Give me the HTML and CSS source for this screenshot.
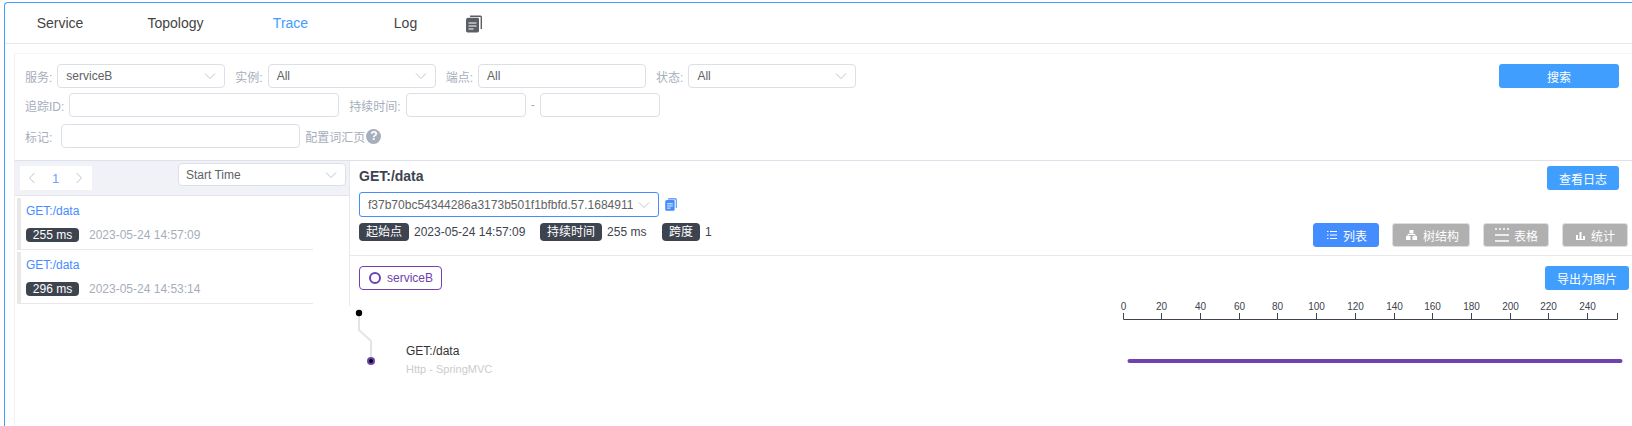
FILE: index.html
```html
<!DOCTYPE html>
<html lang="en">
<head>
  <meta charset="UTF-8">
  <meta name="viewport" content="width=device-width, initial-scale=1.0">
  <title>Trace</title>
  <link rel="stylesheet" href="styles.css">
</head>
<body>
  <svg class="defs" width="0" height="0">
    <symbol id="chevron-down" viewBox="0 0 12 8">
      <path d="M1 1.5 6 6.5 11 1.5" fill="none" stroke="#c0c4cc" stroke-width="1"/>
    </symbol>
    <symbol id="copy" viewBox="0 0 16 18">
      <path d="M4 0.5H14.5A1.5 1.5 0 0 1 16 2V14H14.6V2H4Z" fill="currentColor"/>
      <path d="M2.2 2.8H11.8A1.2 1.2 0 0 1 13 4V4.5 15.8A1.7 1.7 0 0 1 11.3 17.5H1.7A1.7 1.7 0 0 1 0 15.8V5A2.2 2.2 0 0 1 2.2 2.8Z" fill="currentColor"/>
      <path d="M2.5 8H10.5M2.5 11H10.5M2.5 14H7.5" stroke="#fff" stroke-width="1.2"/>
    </symbol>
  </svg>

  <div class="frame">
    <nav class="tabs">
      <a class="tab">Service</a>
      <a class="tab">Topology</a>
      <a class="tab active">Trace</a>
      <a class="tab">Log</a>
      <svg class="tab-icon" width="16" height="18"><use href="#copy"/></svg>
    </nav>

    <div class="content">
      <section class="filters">
        <div class="filter-row">
          <span class="label">服务:</span>
          <div class="field w-select">serviceB<svg class="chevron" width="12" height="8"><use href="#chevron-down"/></svg></div>
          <span class="label">实例:</span>
          <div class="field w-select">All<svg class="chevron" width="12" height="8"><use href="#chevron-down"/></svg></div>
          <span class="label">端点:</span>
          <div class="field w-select">All</div>
          <span class="label">状态:</span>
          <div class="field w-select">All<svg class="chevron" width="12" height="8"><use href="#chevron-down"/></svg></div>
          <button class="btn btn-search">搜索</button>
        </div>
        <div class="filter-row row-2">
          <span class="label">追踪ID:</span>
          <div class="field w-trace"></div>
          <span class="label">持续时间:</span>
          <div class="field w-time"></div>
          <span class="dash">-</span>
          <div class="field w-time"></div>
        </div>
        <div class="filter-row row-3">
          <span class="label label-tag">标记:</span>
          <div class="field w-tag"></div>
          <span class="label-link">配置词汇页</span>
          <span class="help">?</span>
        </div>
      </section>

      <div class="panels">
        <aside class="trace-list">
          <div class="list-head">
            <div class="pager">
              <svg width="8" height="12" viewBox="0 0 8 12"><path d="M6.5 1 1.5 6 6.5 11" fill="none" stroke="#c0c4cc"/></svg>
              <span class="page-num">1</span>
              <svg width="8" height="12" viewBox="0 0 8 12"><path d="M1.5 1 6.5 6 1.5 11" fill="none" stroke="#c0c4cc"/></svg>
            </div>
            <div class="field sort-select">Start Time<svg class="chevron" width="12" height="8"><use href="#chevron-down"/></svg></div>
          </div>
          <div class="list-item">
            <a class="item-title">GET:/data</a>
            <div class="item-meta"><span class="tag tag-ms">255 ms</span><span class="item-date">2023-05-24 14:57:09</span></div>
          </div>
          <div class="list-item">
            <a class="item-title">GET:/data</a>
            <div class="item-meta"><span class="tag tag-ms">296 ms</span><span class="item-date">2023-05-24 14:53:14</span></div>
          </div>
        </aside>

        <main class="trace-detail">
          <div class="detail-head">
            <div class="title-row">
              <h3 class="detail-title">GET:/data</h3>
              <button class="btn btn-log">查看日志</button>
            </div>
            <div class="id-row">
              <div class="field id-select"><span class="id-text">f37b70bc54344286a3173b501f1bfbfd.57.1684911</span><svg class="chevron" width="12" height="8"><use href="#chevron-down"/></svg></div>
              <svg class="id-copy" width="12" height="13"><use href="#copy"/></svg>
            </div>
            <div class="info-row">
              <span class="tag">起始点</span><span class="info-val w-start">2023-05-24 14:57:09</span>
              <span class="tag">持续时间</span><span class="info-val w-dur">255 ms</span>
              <span class="tag">跨度</span><span class="info-val">1</span>
              <div class="view-btns">
                <button class="view-btn on">
                  <svg width="10" height="10" viewBox="0 0 10 10"><path d="M0 1.5H1.5M3 1.5H10M0 5H1.5M3 5H10M0 8.5H1.5M3 8.5H10" stroke="#fff" stroke-width="1.2"/></svg>列表
                </button>
                <button class="view-btn">
                  <svg width="11" height="10" viewBox="0 0 11 10"><path d="M3.5 0H7.5V3.5H3.5ZM0 6H4.5V10H0ZM6.5 6H11V10H6.5Z" fill="#fff"/><path d="M2 6V4.5H9V6" fill="none" stroke="#fff"/></svg>树结构
                </button>
                <button class="view-btn">
                  <svg width="14" height="14" viewBox="0 0 14 14"><path d="M0 1H2M4 1H6M8 1H10M12 1H14M0 7H14M0 13H14" stroke="#fff" stroke-width="1.6"/></svg>表格
                </button>
                <button class="view-btn">
                  <svg width="9" height="9" viewBox="0 0 9 9"><path d="M0 4H2V8H0ZM3.5 1H5.5V8H3.5ZM7 5H9V8H7ZM0 8H9V9H0Z" fill="#fff"/></svg>统计
                </button>
              </div>
            </div>
          </div>

          <div class="service-row">
            <span class="service-tag"><svg width="12" height="12" viewBox="0 0 12 12"><circle cx="6" cy="6" r="5" fill="none" stroke="#6f42b0" stroke-width="2"/></svg>serviceB</span>
            <button class="btn btn-export">导出为图片</button>
          </div>

          <svg class="trace-chart" width="1282" height="110" viewBox="0 0 1282 110">
            <path d="M9 18V35L21 46V66" fill="none" stroke="#e4e4e4" stroke-width="2"/>
            <circle cx="9" cy="18" r="3.2" fill="#000"/>
            <circle cx="21" cy="66" r="4" fill="#6f42b0"/>
            <circle cx="21" cy="66" r="2" fill="#000"/>
            <text class="span-name" x="56" y="60">GET:/data</text>
            <text class="span-sub" x="56" y="78">Http - SpringMVC</text>

            <g class="axis">
              <path d="M773.5 18V24.5H1267.5V18M811.5 18V24M850.5 18V24M889.5 18V24M927.5 18V24M966.5 18V24M1005.5 18V24M1044.5 18V24M1082.5 18V24M1121.5 18V24M1160.5 18V24M1198.5 18V24M1237.5 18V24" fill="none" stroke="#3d444f"/>
              <text x="773.5" y="15">0</text>
              <text x="811.5" y="15">20</text>
              <text x="850.5" y="15">40</text>
              <text x="889.5" y="15">60</text>
              <text x="927.5" y="15">80</text>
              <text x="966.5" y="15">100</text>
              <text x="1005.5" y="15">120</text>
              <text x="1044.5" y="15">140</text>
              <text x="1082.5" y="15">160</text>
              <text x="1121.5" y="15">180</text>
              <text x="1160.5" y="15">200</text>
              <text x="1198.5" y="15">220</text>
              <text x="1237.5" y="15">240</text>
            </g>
            <rect x="777.5" y="64" width="495" height="4" rx="2" fill="#6f42b0"/>
          </svg>
        </main>
      </div>
    </div>
  </div>
</body>
</html>
```

FILE: styles.css
```css
* {
  box-sizing: border-box;
}
html, body {
  height: 100%;
}
body {
  margin: 0;
  overflow: hidden;
  background: #fff;
  color: #3d444f;
  font-family: "Liberation Sans", "Noto Sans CJK SC", sans-serif;
  font-size: 12px;
}
.defs {
  position: absolute;
}
.frame {
  height: 424px;
  margin: 2px 0 0 4px;
  border: 1px solid #409eff;
  border-width: 1px 0 0 1px;
  border-top-left-radius: 4px;
  display: flex;
  flex-direction: column;
}

/* tabs */
.tabs {
  height: 41px;
  flex: none;
  display: flex;
  align-items: center;
  border-bottom: 1px solid #e8e8e8;
}
.tab {
  width: 115px;
  text-align: center;
  font-size: 14px;
  color: #444;
}
.tab:first-child {
  width: 110px;
  margin-right: 3px;
}
.tab.active {
  color: #409eff;
}
.tab-icon {
  margin: 2px 0 0 3px;
  color: #5a5f66;
}

/* filters */
.content {
  flex: 1;
  min-height: 0;
  margin: 9px 0 0 9px;
  border-left: 1px solid #f0f0f0;
  border-top: 1px solid #f5f5f5;
  display: flex;
  flex-direction: column;
}
.filters {
  height: 107px;
  flex: none;
  padding-top: 10px;
  border-bottom: 1px solid #dfe1ea;
}
.filter-row {
  height: 24px;
  display: flex;
  align-items: center;
}
.row-2 {
  margin-top: 5px;
}
.row-3 {
  margin-top: 7px;
}
.label {
  margin-left: 10px;
  margin-right: 5px;
  color: #a7aebb;
  white-space: nowrap;
}
.label-tag {
  margin-right: 9px;
}
.label-link {
  margin-left: 5px;
  color: #a7aebb;
  white-space: nowrap;
}
.help {
  width: 15px;
  height: 15px;
  margin-left: 1px;
  border-radius: 50%;
  background: #a7aebb;
  color: #fff;
  font-size: 12px;
  font-weight: bold;
  line-height: 15px;
  text-align: center;
}
.dash {
  width: 14px;
  text-align: center;
  color: #a7aebb;
}
.field {
  height: 24px;
  flex: none;
  display: flex;
  align-items: center;
  justify-content: space-between;
  padding: 0 8px;
  border: 1px solid #dcdfe6;
  border-radius: 4px;
  background: #fff;
  color: #606266;
}
.w-select {
  width: 168px;
}
.w-trace {
  width: 270px;
}
.w-time {
  width: 120px;
}
.w-tag {
  width: 239px;
}
.chevron {
  flex: none;
}

/* buttons */
.btn {
  height: 24px;
  flex: none;
  padding: 0;
  border: none;
  border-radius: 3px;
  background: #409eff;
  color: #fff;
  font: inherit;
}
.btn-search {
  width: 120px;
  margin-left: auto;
  margin-right: 13px;
}
.btn-log {
  width: 72px;
  margin-right: 9px;
}
.btn-export {
  width: 84px;
}

/* left list */
.panels {
  flex: 1;
  min-height: 0;
  display: flex;
  align-items: flex-start;
}
.trace-list {
  width: 335px;
  height: 145px;
  flex: none;
  border-right: 1px solid #e8e8e8;
}
.list-head {
  height: 35px;
  padding: 2px 3px 0 5px;
  display: flex;
  justify-content: space-between;
  align-items: flex-start;
  background: #f0f2f8;
  border-bottom: 1px solid #e4e6ee;
}
.pager {
  width: 72px;
  height: 24px;
  margin-top: 3px;
  padding: 0 9px 0 8px;
  display: flex;
  align-items: center;
  justify-content: space-between;
  background: #fff;
}
.page-num {
  color: #6aa3fb;
  font-size: 13px;
}
.sort-select {
  width: 168px;
  height: 23px;
  padding-left: 7px;
}
.list-item {
  width: 296px;
  height: 52px;
  margin: 2px 0 0 2px;
  padding: 6px 0 0 5px;
  border-left: 4px solid #e8e8e8;
  border-bottom: 1px solid #e8e8e8;
}
.item-title {
  display: block;
  height: 15px;
  line-height: 15px;
  color: #448dfe;
}
.item-meta {
  margin-top: 9px;
  display: flex;
  align-items: center;
}
.item-date {
  margin-left: 10px;
  color: #a7aebb;
}
.tag {
  height: 18px;
  flex: none;
  padding: 0 7px;
  border-radius: 4px;
  background: #3d444f;
  color: #fff;
  line-height: 18px;
  white-space: nowrap;
}
.tag-ms {
  height: 14px;
  width: 53px;
  padding: 0;
  text-align: center;
  line-height: 14px;
}

/* right detail */
.trace-detail {
  flex: 1;
  min-width: 0;
}
.detail-head {
  height: 95px;
  padding: 5px 4px 0 9px;
  border-bottom: 1px solid #e8e8e8;
}
.title-row {
  height: 24px;
  display: flex;
  justify-content: space-between;
  align-items: center;
}
.detail-title {
  margin: 0 0 4px;
  font-size: 14px;
  color: #3d444f;
}
.id-row {
  margin-top: 2px;
  display: flex;
  align-items: center;
}
.id-select {
  width: 300px;
  height: 25px;
  border-color: #448dfe;
  border-radius: 3px;
}
.id-text {
  width: 265px;
  overflow: hidden;
  white-space: nowrap;
}
.id-copy {
  margin-left: 6px;
  color: #448dfe;
}
.info-row {
  height: 24px;
  margin-top: 6px;
  display: flex;
  align-items: flex-start;
}
.info-val {
  margin-left: 5px;
  height: 18px;
  line-height: 18px;
}
.w-start {
  width: 126px;
}
.w-dur {
  width: 55px;
}
.view-btns {
  margin-left: auto;
  display: flex;
  gap: 13px;
}
.view-btn {
  height: 24px;
  padding: 0 10px 0 13px;
  display: flex;
  align-items: center;
  gap: 6px;
  border: 1px solid #dcdfe6;
  border-radius: 3px;
  background: #b0b0b0;
  color: #fff;
  font: inherit;
}
.view-btn.on {
  background: #448dfe;
  border-color: #448dfe;
  padding-right: 11px;
}
.view-btn:nth-child(3) {
  padding-left: 11px;
  gap: 5px;
}
.view-btn:nth-child(4) {
  padding-right: 12px;
}
.service-row {
  margin-top: 10px;
  padding: 0 3px 0 9px;
  display: flex;
  justify-content: space-between;
}
.service-tag {
  width: 83px;
  height: 24px;
  padding-left: 9px;
  display: flex;
  align-items: center;
  gap: 6px;
  border: 1px solid #6f42b0;
  border-radius: 4px;
  color: #6f42b0;
}
.trace-chart {
  display: block;
  margin-top: 5px;
}
.span-name {
  font-size: 12px;
  fill: #333;
}
.span-sub {
  font-size: 11px;
  fill: #ccc;
}
.axis text {
  font-size: 10px;
  fill: #3d444f;
  text-anchor: middle;
}
```
